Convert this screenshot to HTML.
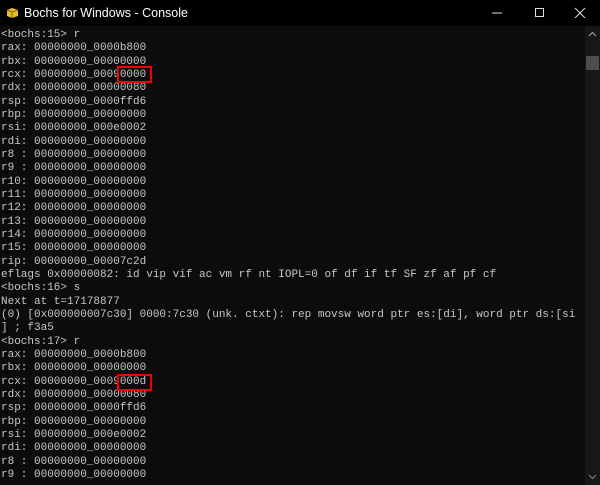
<!DOCTYPE html>
<html><head><style>
html,body{margin:0;padding:0;width:600px;height:485px;overflow:hidden;background:#0c0c0c}
.title{position:absolute;left:0;top:0;width:600px;height:26px;background:#000;color:#fff;font:12.5px "Liberation Sans",sans-serif}
.title .t{position:absolute;left:24px;top:6px}
.con{position:absolute;left:1px;top:29px;font:11px/13.33px "Liberation Mono",monospace;color:#c8c8c8;white-space:pre;margin:0;transform:scaleY(1.12);transform-origin:0 0}
.sb{position:absolute;left:585px;top:26px;width:15px;height:459px;background:#171717}
.box{position:absolute;border:2px solid #e00;width:31px;height:13px}
</style></head><body>
<div class="title">
<svg style="position:absolute;left:6px;top:7px" width="13" height="12" viewBox="0 0 13 12"><path d="M1 3 L6 1 L12 3 L12 9 L6 11 L1 9Z" fill="#e8c020"/><path d="M1 3 L6 5 L12 3 M6 5 L6 11" stroke="#806010" fill="none"/></svg>
<span class="t">Bochs for Windows - Console</span>
<svg style="position:absolute;left:490px;top:6px" width="14" height="14"><line x1="2" y1="7" x2="12" y2="7" stroke="#ddd"/></svg>
<svg style="position:absolute;left:533px;top:6px" width="14" height="14"><rect x="2.5" y="2.5" width="8" height="8" fill="none" stroke="#ddd"/></svg>
<svg style="position:absolute;left:573px;top:6px" width="14" height="14"><path d="M2 2L12 12M12 2L2 12" stroke="#ddd"/></svg>
</div>
<div class="sb">
<svg style="position:absolute;left:3px;top:5px" width="9" height="6"><path d="M1 5L4.5 1.5L8 5" stroke="#aaa" fill="none"/></svg>
<div style="position:absolute;left:1px;top:30px;width:13px;height:14px;background:#4d4d4d"></div>
<svg style="position:absolute;left:3px;top:448px" width="9" height="6"><path d="M1 1L4.5 4.5L8 1" stroke="#888" fill="none"/></svg>
</div>
<pre class="con" style="transform:none">&lt;bochs:15&gt; r
rax: 00000000_0000b800
rbx: 00000000_00000000
rcx: 00000000_00090000
rdx: 00000000_00000080
rsp: 00000000_0000ffd6
rbp: 00000000_00000000
rsi: 00000000_000e0002
rdi: 00000000_00000000
r8 : 00000000_00000000
r9 : 00000000_00000000
r10: 00000000_00000000
r11: 00000000_00000000
r12: 00000000_00000000
r13: 00000000_00000000
r14: 00000000_00000000
r15: 00000000_00000000
rip: 00000000_00007c2d
eflags 0x00000082: id vip vif ac vm rf nt IOPL=0 of df if tf SF zf af pf cf
&lt;bochs:16&gt; s
Next at t=17178877
(0) [0x000000007c30] 0000:7c30 (unk. ctxt): rep movsw word ptr es:[di], word ptr ds:[si
] ; f3a5
&lt;bochs:17&gt; r
rax: 00000000_0000b800
rbx: 00000000_00000000
rcx: 00000000_0009000d
rdx: 00000000_00000080
rsp: 00000000_0000ffd6
rbp: 00000000_00000000
rsi: 00000000_000e0002
rdi: 00000000_00000000
r8 : 00000000_00000000
r9 : 00000000_00000000</pre>
<div class="box" style="left:117px;top:66px"></div>
<div class="box" style="left:117px;top:374px"></div>
</body></html>
